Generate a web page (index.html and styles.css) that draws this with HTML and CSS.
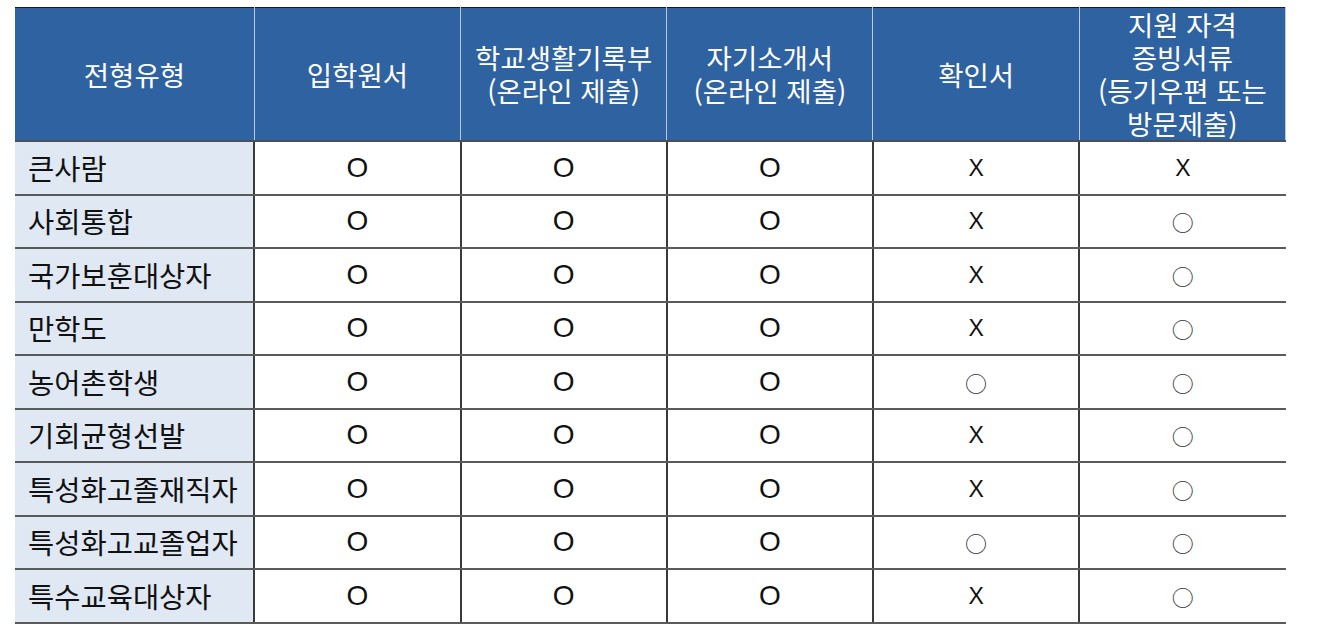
FILE: index.html
```html
<!DOCTYPE html>
<html lang="ko">
<head>
<meta charset="utf-8">
<title>전형유형별 제출서류</title>
<link rel="stylesheet" href="styles.css">
</head>
<body>
<table class="docs">
  <colgroup>
    <col class="c-type"><col class="c-doc"><col class="c-doc"><col class="c-doc"><col class="c-doc"><col class="c-doc">
  </colgroup>
  <thead>
    <tr>
      <th>전형유형</th>
      <th>입학원서</th>
      <th>학교생활기록부<br>(온라인 제출)</th>
      <th>자기소개서<br>(온라인 제출)</th>
      <th>확인서</th>
      <th>지원 자격<br>증빙서류<br>(등기우편 또는<br>방문제출)</th>
    </tr>
  </thead>
  <tbody>
    <tr><td class="type">큰사람</td><td class="o">O</td><td class="o">O</td><td class="o">O</td><td class="x">X</td><td class="x">X</td></tr>
    <tr><td class="type">사회통합</td><td class="o">O</td><td class="o">O</td><td class="o">O</td><td class="x">X</td><td class="ring">○</td></tr>
    <tr><td class="type">국가보훈대상자</td><td class="o">O</td><td class="o">O</td><td class="o">O</td><td class="x">X</td><td class="ring">○</td></tr>
    <tr><td class="type">만학도</td><td class="o">O</td><td class="o">O</td><td class="o">O</td><td class="x">X</td><td class="ring">○</td></tr>
    <tr><td class="type">농어촌학생</td><td class="o">O</td><td class="o">O</td><td class="o">O</td><td class="ring">○</td><td class="ring">○</td></tr>
    <tr><td class="type">기회균형선발</td><td class="o">O</td><td class="o">O</td><td class="o">O</td><td class="x">X</td><td class="ring">○</td></tr>
    <tr><td class="type">특성화고졸재직자</td><td class="o">O</td><td class="o">O</td><td class="o">O</td><td class="x">X</td><td class="ring">○</td></tr>
    <tr><td class="type">특성화고교졸업자</td><td class="o">O</td><td class="o">O</td><td class="o">O</td><td class="ring">○</td><td class="ring">○</td></tr>
    <tr><td class="type">특수교육대상자</td><td class="o">O</td><td class="o">O</td><td class="o">O</td><td class="x">X</td><td class="ring">○</td></tr>
  </tbody>
</table>
</body>
</html>
```
FILE: styles.css
```css
html, body {
  margin: 0;
  padding: 0;
  background: #ffffff;
}

body {
  padding: 7px 0 0 15px;
  font-family: "Noto Sans CJK KR", "Noto Sans", "Liberation Sans", sans-serif;
}

.docs {
  border-collapse: collapse;
  table-layout: fixed;
  width: 1271px;
  border-top: 1px solid #1a1a1a;
}

.c-type { width: 239px; }
.c-doc { width: 206px; }

.docs th {
  background: #2f62a0;
  color: #ffffff;
  font-weight: 400;
  font-size: 27.5px;
  line-height: 33px;
  height: 132px;
  padding: 0;
  text-align: center;
  vertical-align: middle;
  border-left: 1px solid #b9c9de;
  border-bottom: 2px solid #4a4f57;
}

.docs th:first-child {
  border-left: none;
}

.docs th:last-child {
  border-right: 1px solid #b9c9de;
}

.docs td {
  height: 51.5px;
  padding: 0;
  text-align: center;
  vertical-align: middle;
  color: #111111;
  font-size: 24px;
  line-height: 30px;
  border-left: 2px solid #3a3a3a;
  border-bottom: 2px solid #5a5a5a;
}

.docs td:first-child {
  border-left: none;
}

.docs td.type {
  background: #dfe8f3;
  text-align: left;
  padding-left: 13px;
  font-size: 28.5px;
}

.docs td.o {
  font-family: "Liberation Sans", "Noto Sans", sans-serif;
  font-size: 28px;
}

.docs td.x {
  font-family: "Liberation Sans", "Noto Sans", sans-serif;
  font-size: 23px;
}

.docs td.ring {
  font-family: "Noto Sans CJK KR", sans-serif;
  font-size: 22px;
  color: #333333;
}
```
